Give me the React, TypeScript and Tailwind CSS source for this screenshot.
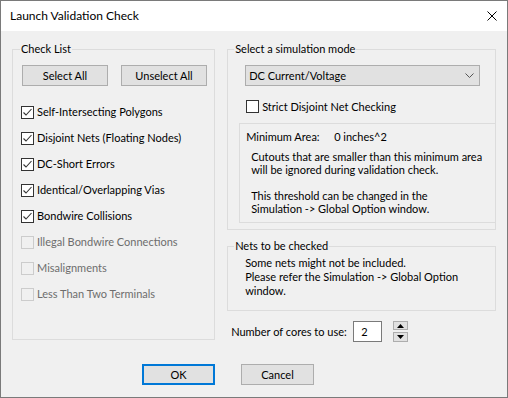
import React from 'react';

const checks = [
  { label: 'Self-Intersecting Polygons', checked: true, disabled: false },
  { label: 'Disjoint Nets (Floating Nodes)', checked: true, disabled: false },
  { label: 'DC-Short Errors', checked: true, disabled: false },
  { label: 'Identical/Overlapping Vias', checked: true, disabled: false },
  { label: 'Bondwire Collisions', checked: true, disabled: false },
  { label: 'Illegal Bondwire Connections', checked: false, disabled: true },
  { label: 'Misalignments', checked: false, disabled: true },
  { label: 'Less Than Two Terminals', checked: false, disabled: true },
];

const Box: React.FC<{ checked?: boolean; disabled?: boolean }> = ({ checked, disabled }) => (
  <span
    className={
      disabled
        ? 'w-[13px] h-[13px] shrink-0 border border-[#cccccc] flex items-center justify-center'
        : 'w-[13px] h-[13px] shrink-0 border border-[#333333] bg-white flex items-center justify-center'
    }
  >
    {checked && (
      <svg width="11" height="11" viewBox="0 0 11 11">
        <path d="M1.5 5.5 L4 8 L9.5 2" stroke="#333333" strokeWidth="1.1" fill="none" />
      </svg>
    )}
  </span>
);

const Button: React.FC<{ label: string; className: string }> = ({ label, className }) => (
  <div className={`flex items-center justify-center bg-[#e1e1e1] ${className}`}>{label}</div>
);

const App: React.FC = () => {
  return (
    <div className="w-[508px] h-[398px] bg-[#f0f0f0] border border-[#7a7a7a] flex flex-col text-[11px] leading-[16px] text-black font-['Lato','Liberation_Sans',sans-serif]">
      {/* title bar */}
      <div className="h-[30px] bg-white flex items-center justify-between pl-[9px] pr-[10px] shrink-0">
        <span className="text-[12px]">Launch Validation Check</span>
        <svg width="10" height="10" viewBox="0 0 10 10">
          <path d="M0.5 0.5 L9.5 9.5 M9.5 0.5 L0.5 9.5" stroke="#000" strokeWidth="1" fill="none" />
        </svg>
      </div>

      <div className="h-[301px] flex px-[11px] mt-[10px] shrink-0">
        {/* check list */}
        <fieldset className="w-[204px] h-[299px] border border-[#dcdcdc]">
          <legend className="ml-[7px] px-[1px]">Check List</legend>
          <div className="mt-[8px] ml-[9px] flex gap-[13px]">
            <Button label="Select All" className="w-[86px] h-[21px] border border-[#adadad]" />
            <Button label="Unselect All" className="w-[86px] h-[21px] border border-[#adadad]" />
          </div>
          <div className="mt-[13px] ml-[8px] flex flex-col">
            {checks.map((c) => (
              <div key={c.label} className="h-[26px] flex items-center">
                <Box checked={c.checked} disabled={c.disabled} />
                <span className={c.disabled ? 'ml-[3px] text-[#6d6d6d]' : 'ml-[3px]'}>{c.label}</span>
              </div>
            ))}
          </div>
        </fieldset>

        <div className="ml-[12px] w-[270px] flex flex-col">
          <fieldset className="h-[189px] border border-[#dcdcdc]">
            <legend className="ml-[6px] px-[1px]">Select a simulation mode</legend>
            <div className="mt-[8px] ml-[17px] w-[235px] h-[21px] border border-[#adadad] bg-[#e1e1e1] flex items-center justify-between pl-[3px] pr-[5px]">
              <span>DC Current/Voltage</span>
              <svg width="9" height="5" viewBox="0 0 9 5">
                <path d="M0.5 0.5 L4.5 4.5 L8.5 0.5" stroke="#555" strokeWidth="1" fill="none" />
              </svg>
            </div>
            <div className="mt-[14px] ml-[18px] h-[13px] flex items-center">
              <Box />
              <span className="ml-[3px]">Strict Disjoint Net Checking</span>
            </div>
            <div className="mt-[10px] ml-[11px] h-[100px] border-l border-t border-b border-[#dcdcdc] pt-[5px]">
              <div className="flex pl-[6px]">
                <span className="w-[88px]">Minimum Area:</span>
                <span>0 inches^2</span>
              </div>
              <div className="mt-[5px] pl-[11px] leading-[13px] whitespace-nowrap">
                <div>Cutouts that are smaller than this minimum area</div>
                <div>will be ignored during validation check.</div>
                <div className="mt-[13px]">This threshold can be changed in the</div>
                <div>Simulation -&gt; Global Option window.</div>
              </div>
            </div>
          </fieldset>

          <fieldset className="mt-[8px] h-[73px] border border-[#dcdcdc]">
            <legend className="ml-[6px] px-[1px]">Nets to be checked</legend>
            <div className="pt-[2px] ml-[17px] leading-[14px]">
              <div>Some nets might not be included.</div>
              <div>Please refer the Simulation -&gt; Global Option</div>
              <div>window.</div>
            </div>
          </fieldset>

          <div className="mt-[10px] ml-[4px] flex items-center">
            <span className="w-[122px] whitespace-nowrap">Number of cores to use:</span>
            <div className="w-[29px] h-[21px] border border-[#7a7a7a] bg-white pl-[7px] flex items-center">2</div>
            <div className="ml-[11px] w-[15px] flex flex-col">
              <div className="h-[9px] border border-[#adadad] bg-[#e1e1e1] flex items-center justify-center">
                <svg width="7" height="4" viewBox="0 0 7 4">
                  <path d="M0 4 L3.5 0 L7 4 Z" fill="#000" />
                </svg>
              </div>
              <div className="mt-[2px] h-[10px] border border-[#adadad] bg-[#e1e1e1] flex items-center justify-center">
                <svg width="7" height="4" viewBox="0 0 7 4">
                  <path d="M0 0 L3.5 4 L7 0 Z" fill="#000" />
                </svg>
              </div>
            </div>
          </div>
        </div>
      </div>

      <div className="mt-[22px] pl-[141px] flex">
        <Button label="OK" className="w-[73px] h-[21px] border-2 border-[#0078d7]" />
        <Button label="Cancel" className="ml-[26px] w-[73px] h-[21px] border border-[#adadad]" />
      </div>
    </div>
  );
};

export default App;
